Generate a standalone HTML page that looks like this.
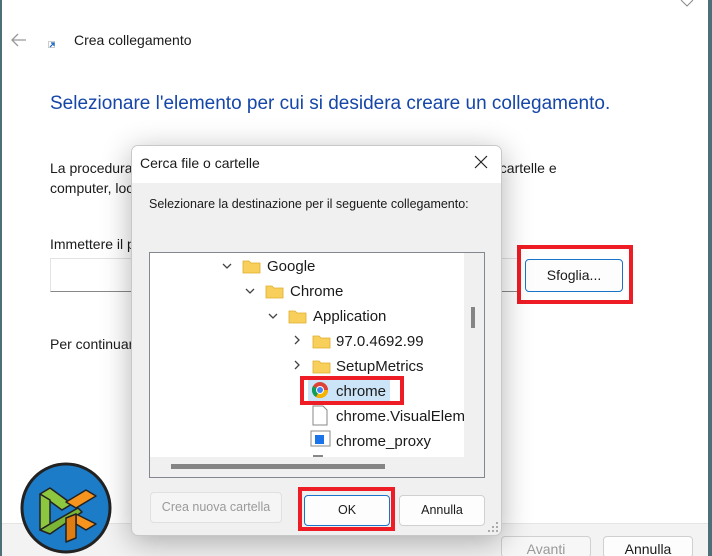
<!DOCTYPE html>
<html style="width:712px;height:556px;overflow:hidden"><head><meta charset="utf-8">
<style>
*{margin:0;padding:0;box-sizing:border-box}
body{width:712px;height:556px;overflow:hidden;background:#4f6f78;font-family:"Liberation Sans",sans-serif;position:relative}
.abs{position:absolute}
.win{left:2px;top:0;width:706px;height:556px;background:#fff}
.t{position:absolute;white-space:nowrap;color:#1a1a1a}
.btn{position:absolute;border:1px solid #d0d0d0;border-radius:4px;background:#fdfdfd;font-size:13px;text-align:center;color:#1a1a1a}
.red{position:absolute;border:4px solid #ee1c24}
.row{position:absolute;font-size:15px;color:#1a1a1a;white-space:nowrap}
</style></head><body>
<div class="abs win"></div>
<svg class="abs" style="left:10px;top:32px" width="18" height="16"><path d="M16 8H2M8 2L2 8l6 6" stroke="#999" stroke-width="1.3" fill="none"/></svg>
<div class="abs" style="left:48px;top:41px;width:7px;height:7px;background:#fff;border:1px solid #ccc"></div>
<svg class="abs" style="left:48px;top:41px" width="8" height="8"><path d="M2 6L6 2M3 2h3v3" stroke="#1565c0" stroke-width="1.2" fill="none"/></svg>
<div class="t" style="left:74px;top:32px;font-size:14px">Crea collegamento</div>
<svg class="abs" style="left:680px;top:0" width="14" height="8"><path d="M1 0l6 6 6-6" stroke="#888" fill="none"/></svg>
<div class="t" style="left:50px;top:93px;font-size:19px;color:#1546a8">Selezionare l'elemento per cui si desidera creare un collegamento.</div>
<div class="t" style="left:50px;top:160px;font-size:14px">La procedura guidata consente di creare collegamenti a programmi, file, cartelle e</div>
<div class="t" style="left:50px;top:180px;font-size:14px">computer, locali o in rete, oppure a indirizzi Internet.</div>
<div class="t" style="left:50px;top:236px;font-size:14px">Immettere il percorso dell'elemento:</div>
<div class="abs" style="left:50px;top:258px;width:470px;height:34px;border:1px solid #e2e2e2;border-bottom:1px solid #888;background:#fff"></div>
<div class="btn" style="left:525px;top:259px;width:98px;height:33px;line-height:31px;border-color:#1a73c8;font-size:14px">Sfoglia...</div>
<div class="red" style="left:517px;top:245px;width:116px;height:59px"></div>
<div class="t" style="left:50px;top:336px;font-size:14px">Per continuare, scegliere Avanti.</div>
<div class="abs" style="left:2px;top:523px;width:706px;height:33px;background:#f3f3f3;border-top:1px solid #e5e5e5"></div>
<div class="btn" style="left:501px;top:536px;width:90px;height:22px;line-height:24px;font-size:14px;color:#999;background:#f7f7f7">Avanti</div>
<div class="btn" style="left:603px;top:536px;width:90px;height:22px;line-height:24px;font-size:14px">Annulla</div>
<svg class="abs" style="left:20px;top:462px" width="94" height="94">
<circle cx="46" cy="46" r="44" fill="#1c7cc7" stroke="#222" stroke-width="3"/>
<g stroke="#222" stroke-width="1.5" stroke-linejoin="round">
<path d="M20 32L30 26 52 42 42 48Z" fill="#8dc63f"/>
<path d="M20 32L30 38 30 62 20 68Z" fill="#8dc63f"/>
<path d="M20 68L30 62 58 46 62 50 30 72Z" fill="#7ab536"/>
<path d="M46 40L66 28 76 34 56 46Z" fill="#f7941d"/>
<path d="M56 52L76 62 66 68 56 62Z" fill="#f7941d"/>
<path d="M46 56L56 52 56 76 46 80Z" fill="#e07d10"/>
</g>
</svg>
<div class="abs" style="left:131px;top:145px;width:371px;height:391px;background:#f0f0f0;border:1px solid #c8c8c8;border-radius:7px;box-shadow:0 6px 30px rgba(0,0,0,.3);overflow:hidden">
 <div class="abs" style="left:0;top:0;width:371px;height:37px;background:#fff"></div>
</div>
<div class="t" style="left:140px;top:155px;font-size:14px">Cerca file o cartelle</div>
<svg class="abs" style="left:474px;top:155px" width="14" height="14"><path d="M1 1l12 12M13 1L1 13" stroke="#222" stroke-width="1.2"/></svg>
<div class="t" style="left:149px;top:197px;font-size:12.5px">Selezionare la destinazione per il seguente collegamento:</div>
<div class="abs" style="left:149px;top:252px;width:336px;height:226px;border:1px solid #828790;background:#fff"></div>
<div class="abs" style="left:464px;top:253px;width:20px;height:224px;background:#f0f0f0"></div>
<div class="abs" style="left:471px;top:307px;width:4px;height:21px;background:#858585"></div>
<div class="abs" style="left:150px;top:457px;width:334px;height:20px;background:#f0f0f0"></div>
<div class="abs" style="left:171px;top:464px;width:214px;height:5px;background:#858585"></div>
<svg class="abs" style="left:150px;top:255px" width="314" height="202">
<g stroke="#444" stroke-width="1.3" fill="none">
<path d="M73 9l4 4 4-4"/><path d="M96 34l4 4 4-4"/><path d="M119 59l4 4 4-4"/>
<path d="M145 81l4 4-4 4"/><path d="M145 106l4 4-4 4"/>
</g>
<g fill="#f8cf5a" stroke="#e0ae2d" stroke-width=".8">
<path d="M93 6h6l2 2h9v10H93Z"/><path d="M116 31h6l2 2h9v10h-17Z"/><path d="M139 56h6l2 2h9v10h-17Z"/>
<path d="M163 81h6l2 2h9v10h-17Z"/><path d="M163 106h6l2 2h9v10h-17Z"/>
</g>
<rect x="158" y="123" width="82" height="24" fill="#cce4f7"/>
<circle cx="170" cy="135" r="8" fill="#db4437"/>
<path d="M170 135L163 131A8 8 0 0 0 166 142Z" fill="#0f9d58"/>
<path d="M170 135L166 142A8 8 0 0 0 178 135Z" fill="#f4b400"/>
<circle cx="170" cy="135" r="4" fill="#fff"/><circle cx="170" cy="135" r="3" fill="#4285f4"/>
<path d="M163 151h10l4 4v15h-14Z" fill="#fff" stroke="#888"/>
<rect x="161" y="176" width="19" height="15" fill="#fff" stroke="#888"/>
<rect x="165" y="180" width="9" height="9" fill="#1a73e8"/>
<rect x="163" y="200" width="10" height="2" fill="#888"/>
</svg>
<div class="row" style="left:267px;top:258px">Google</div>
<div class="row" style="left:290px;top:283px">Chrome</div>
<div class="row" style="left:313px;top:308px">Application</div>
<div class="row" style="left:336px;top:333px">97.0.4692.99</div>
<div class="row" style="left:336px;top:358px">SetupMetrics</div>
<div class="row" style="left:336px;top:383px">chrome</div>
<div class="abs" style="left:336px;top:406px;width:128px;height:24px;overflow:hidden"><div class="row" style="left:0;top:2px">chrome.VisualElementsManifest</div></div>
<div class="row" style="left:336px;top:433px">chrome_proxy</div>
<div class="red" style="left:300px;top:376px;width:104px;height:29px"></div>
<div class="btn" style="left:150px;top:492px;width:132px;height:31px;line-height:29px;color:#9a9a9a;background:#f5f5f5;border-color:#e0e0e0;font-size:12.5px">Crea nuova cartella</div>
<div class="btn" style="left:304px;top:495px;width:86px;height:31px;line-height:29px;border-color:#1a73c8;font-size:12.5px">OK</div>
<div class="btn" style="left:399px;top:495px;width:86px;height:31px;line-height:29px;font-size:12.5px">Annulla</div>
<div class="red" style="left:298px;top:487px;width:97px;height:44px"></div>
<svg class="abs" style="left:488px;top:522px" width="12" height="12"><g fill="#aaa"><rect x="8" y="0" width="2" height="2"/><rect x="4" y="4" width="2" height="2"/><rect x="8" y="4" width="2" height="2"/><rect x="0" y="8" width="2" height="2"/><rect x="4" y="8" width="2" height="2"/><rect x="8" y="8" width="2" height="2"/></g></svg>
</body></html>
